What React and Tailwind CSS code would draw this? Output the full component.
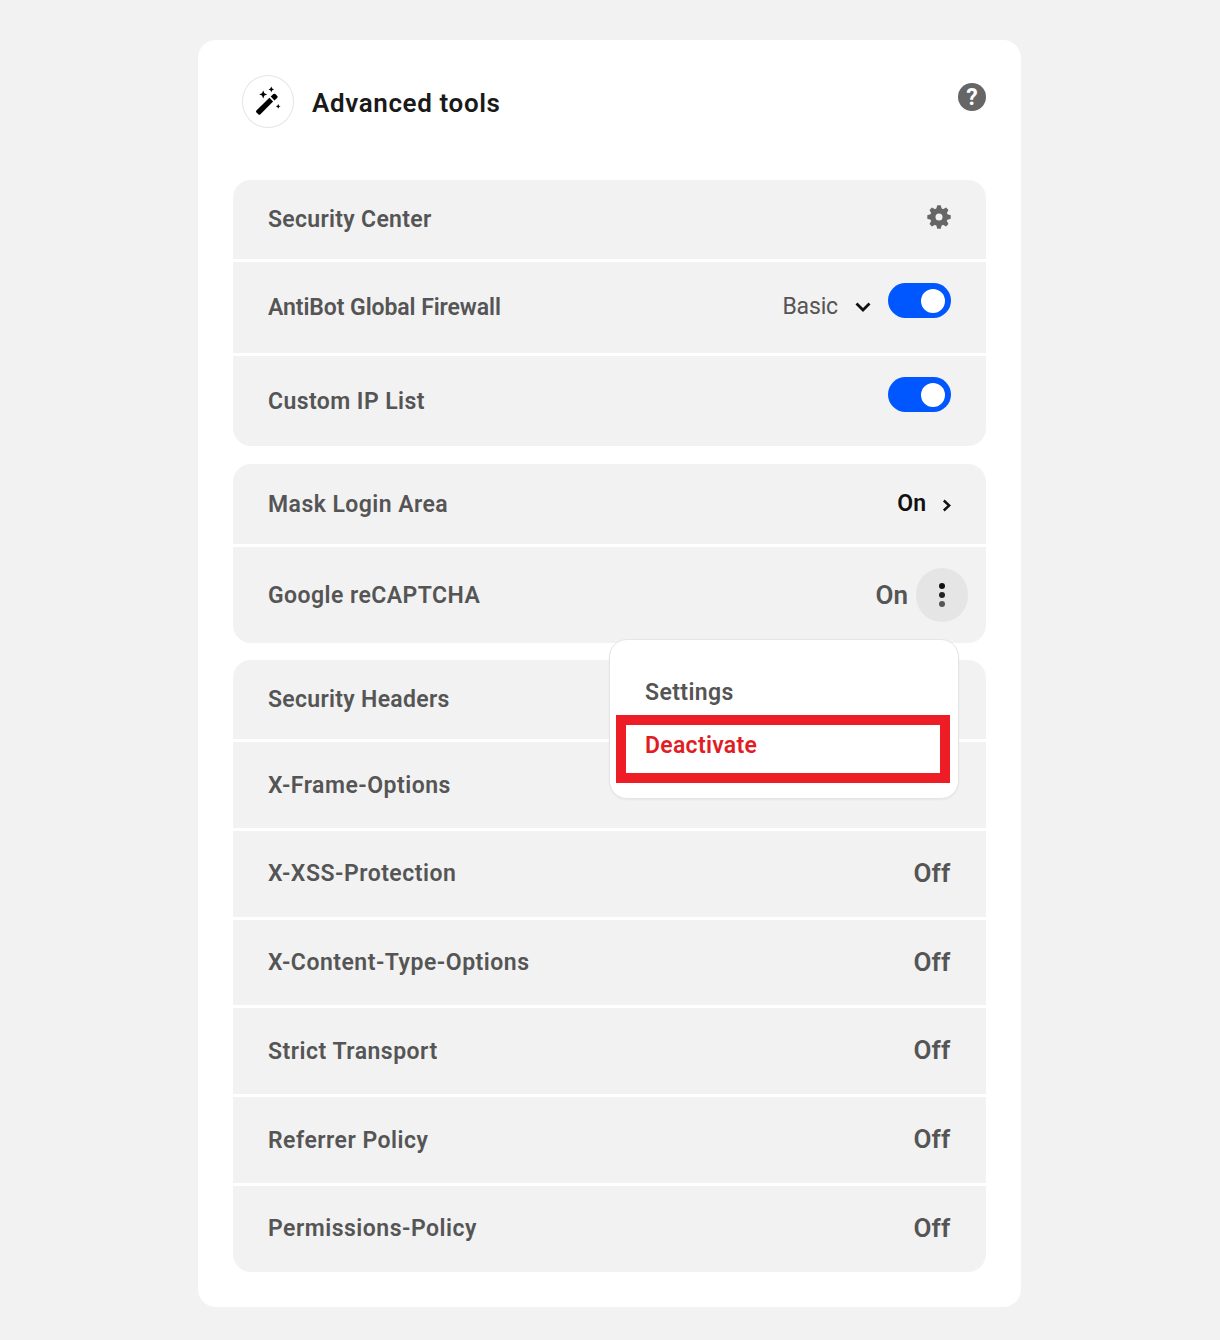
function Row({ label, className, tracking = "tracking-[0.5px]", children }) {
  return (
    <div className={`flex items-start justify-between bg-[#f2f2f2] pl-[35px] pr-[35px] ${className}`}>
      <span className={`mt-px whitespace-nowrap text-[23px] leading-7 font-semibold ${tracking}`}>{label}</span>
      {children}
    </div>
  );
}

function Group({ className = "", children }) {
  return <section className={`flex flex-col gap-[3px] ${className}`}>{children}</section>;
}

function Toggle() {
  return (
    <span className="-mt-[10px] flex h-[35px] w-[63px] items-center justify-end rounded-full bg-[#0057ff] pr-[6px]">
      <span className="size-[24px] rounded-full bg-white" />
    </span>
  );
}

function Off({ className = "" }) {
  return <span className={`mr-[0.6px] text-[26px] leading-7 font-semibold tracking-[0.2px] ${className}`}>Off</span>;
}

function WandIcon() {
  return (
    <svg width="52" height="53" viewBox="0 0 52 53" fill="#000">
      <path d="M14.4 35.6 27.4 22.8 31.1 26.6 18.2 39.5Q17.2 40.3 16.3 39.3L14.4 37.4Q13.6 36.5 14.4 35.6Z" />
      <path d="M28.7 21.6 31.4 19Q32.4 18.3 33.3 19L35.3 21Q36.1 21.9 35.3 22.8L32.5 25.4Z" />
      <path d="M21.2 15.4 22.4 18.2 25.2 19.4 22.4 20.6 21.2 23.4 20 20.6 17.2 19.4 20 18.2Z" />
      <path d="M29.3 11.6 30.2 13.5 32.1 14.4 30.2 15.3 29.3 17.2 28.4 15.3 26.5 14.4 28.4 13.5Z" />
      <path d="M36.2 29 37 30.7 38.6 31.4 37 32.1 36.2 33.8 35.4 32.1 33.8 31.4 35.4 30.7Z" />
    </svg>
  );
}

function GearIcon() {
  return (
    <svg width="24" height="24" viewBox="0 0 24 24" fill="#666">
      <g>
        {[0, 45, 90, 135].map((a) => (
          <path key={a} transform={`rotate(${a} 12 12)`} d="M10.1 .8Q10.2 .3 10.7 .3H13.3Q13.8 .3 13.9 .8L15 5V19L13.9 23.2Q13.8 23.7 13.3 23.7H10.7Q10.2 23.7 10.1 23.2L9 19V5Z" />
        ))}
        <circle cx="12" cy="12" r="8.9" />
      </g>
      <circle cx="12" cy="12" r="3.5" fill="#f2f2f2" />
    </svg>
  );
}

export default function App() {
  return (
    <main className="h-[1340px] w-[1220px] bg-[#f2f2f2] pt-10 pl-[198px] font-['Roboto',sans-serif] text-[#555]">
      <div className="flex h-[1267px] w-[823px] flex-col rounded-[18px] bg-white px-[35px]">
        <header className="flex h-[140px] items-start justify-between pl-[9px]">
          <div className="flex items-start pt-[35px]">
            <span className="flex h-[53px] w-[52px] rounded-full shadow-[inset_0_0_0_1px_#e5e5e5]">
              <WandIcon />
            </span>
            <h1 className="mt-[12px] ml-[18px] text-[26px] leading-8 font-semibold tracking-[0.62px] text-[#1a1a1a]">Advanced tools</h1>
          </div>
          <span className="mt-[43px] flex size-7 items-center justify-center rounded-full bg-[#666] pt-px text-[23px] leading-7 font-bold text-white">?</span>
        </header>

        <Group>
          <Row label="Security Center" className="h-[79px] rounded-t-[18px] pt-[25px]" tracking="tracking-[0.3px]">
            <GearIcon />
          </Row>
          <Row label="AntiBot Global Firewall" className="h-[91px] pt-[31px]" tracking="tracking-[-0.08px]">
            <span className="flex items-start">
              <span className="text-[23px] leading-7 tracking-[-0.15px]">Basic</span>
              <svg className="mt-[8px] mr-[17px] ml-[17px]" width="16" height="12" viewBox="0 0 16 12" fill="none" stroke="#111" strokeWidth="2.8">
                <path d="M1.5 2.5 8 9 14.5 2.5" />
              </svg>
              <Toggle />
            </span>
          </Row>
          <Row label="Custom IP List" className="h-[90px] rounded-b-[18px] pt-[31px]" tracking="tracking-[0.43px]">
            <Toggle />
          </Row>
        </Group>

        <Group className="mt-[18px]">
          <Row label="Mask Login Area" className="h-[80px] rounded-t-[18px] pt-[26px]" tracking="tracking-[0.45px]">
            <span className="flex items-start text-[#111]">
              <span className="text-[23px] leading-7 font-semibold">On</span>
              <svg className="mt-[9px] ml-[16px]" width="9" height="13" viewBox="0 0 9 13" fill="none" stroke="#111" strokeWidth="2.4">
                <path d="M1.8 1.5 7.2 6.5 1.8 11.5" />
              </svg>
            </span>
          </Row>
          <Row label="Google reCAPTCHA" className="relative z-10 h-[96px] rounded-b-[18px] pt-[34px]" tracking="tracking-[0.44px]">
            <span className="-mt-[13px] -mr-[17px] flex items-start">
              <span className="mt-[13px] mr-[8px] text-[26px] leading-7 font-semibold">On</span>
              <span className="flex h-[54px] w-[52px] flex-col items-center justify-center gap-[3px] rounded-full bg-[#e5e5e5]">
                <span className="size-[6px] rounded-full bg-[#111]" />
                <span className="size-[6px] rounded-full bg-[#222]" />
                <span className="size-[6px] rounded-full bg-[#555]" />
              </span>
            </span>
            <div className="absolute top-[92px] left-[376px] h-[160px] w-[350px] rounded-[18px] border border-[#e5e5e5] bg-white pt-[39px] shadow-[0_1px_2px_rgba(0,0,0,0.05)]">
              <div className="pl-[35px] text-[23px] leading-7 font-semibold tracking-[0.4px]">Settings</div>
              <div className="mt-[8px] ml-[6px] h-[68px] w-[334px] border-10 border-[#ee1c25] pt-[7px] pl-[19px] text-[23px] leading-7 font-semibold tracking-[0.3px] text-[#e11d24]">Deactivate</div>
            </div>
          </Row>
        </Group>

        <Group className="mt-[17px]">
          <Row label="Security Headers" className="h-[79px] rounded-t-[18px] pt-[25px]" tracking="tracking-[0.3px]" />
          <Row label="X-Frame-Options" className="h-[86px] pt-[29px]" />
          <Row label="X-XSS-Protection" className="h-[86px] pt-[28px]"><Off /></Row>
          <Row label="X-Content-Type-Options" className="h-[85px] pt-[28px]"><Off /></Row>
          <Row label="Strict Transport" className="h-[86px] pt-[29px]"><Off className="-mt-px" /></Row>
          <Row label="Referrer Policy" className="h-[86px] pt-[29px]"><Off className="-mt-px" /></Row>
          <Row label="Permissions-Policy" className="h-[86px] rounded-b-[18px] pt-[28px]"><Off /></Row>
        </Group>
      </div>
    </main>
  );
}
